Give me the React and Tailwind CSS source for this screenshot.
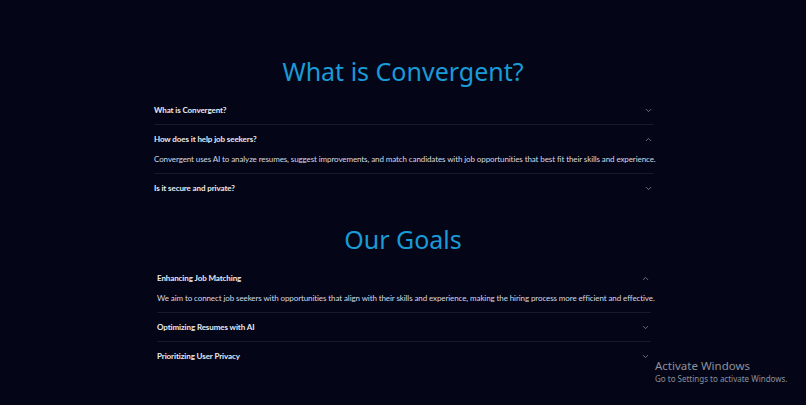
import React, { useState } from 'react';
import { ChevronDown, ChevronUp } from 'lucide-react';

const faqs = [
  { q: 'What is Convergent?', a: 'Convergent is a platform that helps job seekers stand out with AI-powered tools.' },
  { q: 'How does it help job seekers?', a: 'Convergent uses AI to analyze resumes, suggest improvements, and match candidates with job opportunities that best fit their skills and experience.' },
  { q: 'Is it secure and private?', a: 'Yes, your data is encrypted and never shared without your permission.' },
];

const goals = [
  { q: 'Enhancing Job Matching', a: 'We aim to connect job seekers with opportunities that align with their skills and experience, making the hiring process more efficient and effective.' },
  { q: 'Optimizing Resumes with AI', a: 'Our AI gives practical suggestions so every resume puts its best foot forward.' },
  { q: 'Prioritizing User Privacy', a: 'We keep your information safe and give you full control over it.' },
];

const Accordion = ({ items, defaultOpen, width }) => {
  const [open, setOpen] = useState(defaultOpen);

  return (
    <div className={width}>
      {items.map((item, i) => (
        <div key={item.q} className={i < items.length - 1 ? 'border-b border-[#161b2e]' : ''}>
          <button
            onClick={() => setOpen(open === i ? null : i)}
            className="flex h-[28px] w-full items-center justify-between text-left text-[8px] font-bold tracking-[-0.1px] text-[#e8eaf0]"
          >
            {item.q}
            {open === i ? (
              <ChevronUp size={9} className="mr-[1px] text-[#8a8fa0]" />
            ) : (
              <ChevronDown size={9} className="mr-[1px] text-[#8a8fa0]" />
            )}
          </button>
          {open === i && (
            <p className="whitespace-nowrap pb-[8px] text-[8px] leading-[12px] tracking-[-0.1px] text-[#d6d9e2]">{item.a}</p>
          )}
        </div>
      ))}
    </div>
  );
};

export default function App() {
  return (
    <div
      className="relative min-h-[405px] bg-[#040617] pt-[55px]"
      style={{ fontFamily: 'Lato, "Noto Sans", sans-serif' }}
    >
      <section className="flex flex-col items-center">
        <h2 className="mb-[9px] text-[25px] leading-[32px] text-[#1a9ad6]" style={{ fontFamily: '"Noto Sans", sans-serif' }}>What is Convergent?</h2>
        <Accordion items={faqs} defaultOpen={1} width="w-[500px] translate-x-[1px]" />
      </section>

      <section className="mt-[21px] flex flex-col items-center">
        <h2 className="mb-[9px] text-[25px] leading-[32px] text-[#1a9ad6]" style={{ fontFamily: '"Noto Sans", sans-serif' }}>Our Goals</h2>
        <Accordion items={goals} defaultOpen={0} width="w-[494px] translate-x-[1px]" />
      </section>

      <div className="absolute left-[655px] top-[358px] text-[#8d909c]" style={{ fontFamily: '"Noto Sans", sans-serif' }}>
        <p className="text-[11.5px] leading-[15px]">Activate Windows</p>
        <p className="text-[8px] leading-[12px]">Go to Settings to activate Windows.</p>
      </div>
    </div>
  );
}
